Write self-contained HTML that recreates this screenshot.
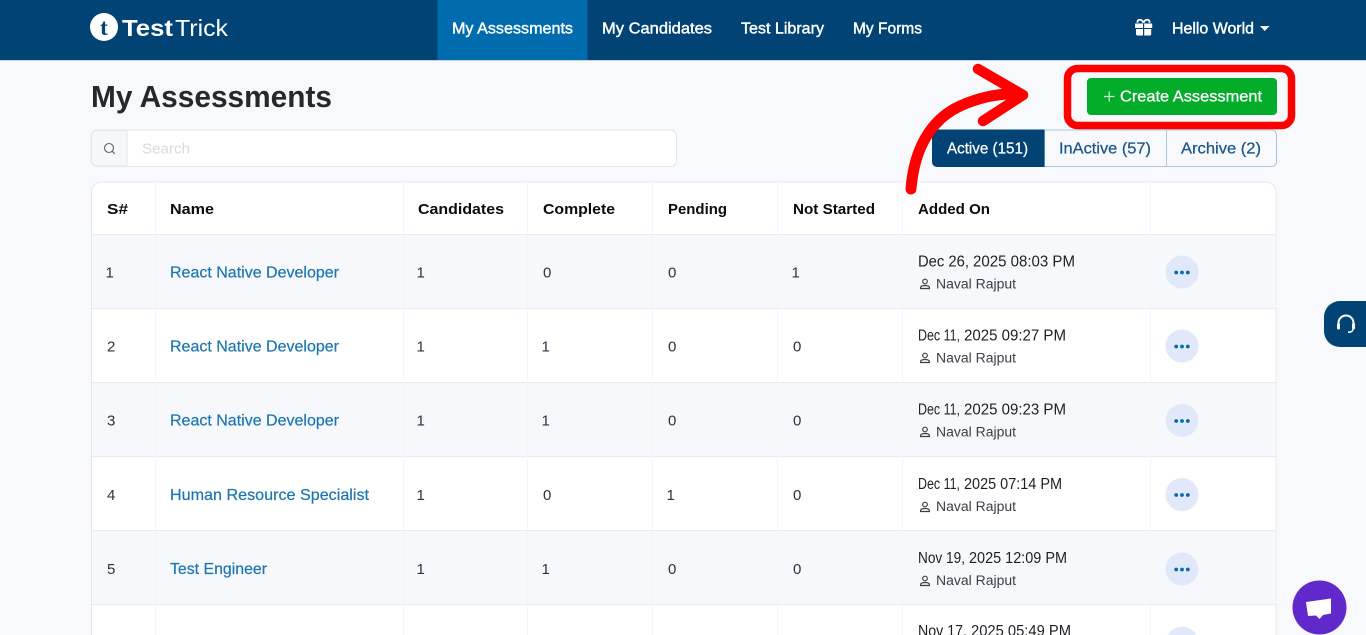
<!DOCTYPE html>
<html><head><meta charset="utf-8"><title>My Assessments</title>
<style>
html,body{margin:0;padding:0;width:1366px;height:635px;overflow:hidden;background:#f8f9fc}
svg{display:block}
text{font-family:"Liberation Sans",Arial,sans-serif;font-size:15px;fill:#212529}
.n{fill:#fff;font-size:15.5px;stroke:#fff;stroke-width:.4}
.h{font-size:15px;font-weight:700;fill:#0b0b0b}
.l{font-size:16px;fill:#1a75b0;stroke:#1a75b0;stroke-width:.2}
.c{font-size:15px;fill:#2b3240}
.d{font-size:15.5px;fill:#1c1f24}
.u{font-size:13.5px;fill:#3a3f47}
.t{font-size:16px;stroke-width:.25}
</style></head><body>
<svg width="1366" height="635" viewBox="0 0 1366 635" xmlns="http://www.w3.org/2000/svg">
<!-- navbar -->
<rect width="1366" height="60" fill="#014375"/>
<rect y="60" width="1366" height="1" fill="#c3d3e0"/>
<rect x="437.500" width="150" height="60" fill="#006bad"/>
<circle cx="104" cy="27" r="14" fill="#fff"/>
<text x="104" y="35" text-anchor="middle" style="font-family:'Liberation Serif',serif;font-size:23px;font-weight:700;fill:#014375">t</text>
<text x="122" y="36" textLength="51" lengthAdjust="spacingAndGlyphs" style="font-size:23px;font-weight:700;fill:#fff">Test</text>
<text x="175" y="36" textLength="53" lengthAdjust="spacingAndGlyphs" style="font-size:23px;fill:#fff">Trick</text>
<text class="n" x="452" y="33.500" textLength="121" lengthAdjust="spacingAndGlyphs">My Assessments</text>
<text class="n" x="602" y="33.500" textLength="110" lengthAdjust="spacingAndGlyphs">My Candidates</text>
<text class="n" x="741" y="33.500" textLength="83" lengthAdjust="spacingAndGlyphs">Test Library</text>
<text class="n" x="853" y="33.500" textLength="69" lengthAdjust="spacingAndGlyphs">My Forms</text>
<text class="n" x="1172" y="33.500" textLength="82" lengthAdjust="spacingAndGlyphs">Hello World</text>
<path d="M1260 26h9.500l-4.750 5z" fill="#fff"/>
<!-- gift -->
<path d="M1135 23.500h8v4.500h-8zM1144.200 23.500h8v4.500h-8zM1136 29h7v6.500h-5.500a1.500 1.500 0 0 1-1.500-1.500zM1144.200 29h7V34a1.500 1.500 0 0 1-1.500 1.500h-5.500z" fill="#fff"/>
<path d="M1143.500 23c-1.500-4.500-7-4-5.800-.3M1143.500 23c1.500-4.500 7-4 5.800-.3" fill="none" stroke="#fff" stroke-width="1.800"/>
<!-- title -->
<text x="91" y="107" textLength="241" lengthAdjust="spacingAndGlyphs" style="font-size:31px;font-weight:700;fill:#25282c">My Assessments</text>
<!-- search -->
<rect x="91" y="130" width="585.500" height="36.500" rx="6" fill="#fff" stroke="#e3e6ea"/>
<path d="M97 130.500h30v35.500h-30a5.500 5.500 0 0 1-5.500-5.500v-24.500a5.500 5.500 0 0 1 5.500-5.500z" fill="#f6f7f9" stroke="#e3e6ea"/>
<circle cx="109" cy="148" r="4.500" fill="none" stroke="#62676d" stroke-width="1.100"/>
<path d="M112.300 151.300l2.500 2.500" stroke="#62676d" stroke-width="1.100"/>
<text x="142" y="153.500" textLength="48" lengthAdjust="spacingAndGlyphs" style="font-size:15px;fill:#d9dadd">Search</text>
<!-- tabs -->
<path d="M1044.500 130h227a5 5 0 0 1 5 5v26.500a5 5 0 0 1-5 5h-227z" fill="#f8f9fc" stroke="#a9c6de"/>
<path d="M1166.500 130v36.500" stroke="#a9c6de"/>
<path d="M937 129.500h107.500v37.500H937a5 5 0 0 1-5-5v-27.500a5 5 0 0 1 5-5z" fill="#014375"/>
<text class="t" x="947" y="153.500" textLength="81" lengthAdjust="spacingAndGlyphs" style="fill:#fff;stroke:#fff">Active (151)</text>
<text class="t" x="1059" y="153.500" textLength="92" lengthAdjust="spacingAndGlyphs" style="fill:#1a5688;stroke:#1a5688">InActive (57)</text>
<text class="t" x="1181" y="153.500" textLength="80" lengthAdjust="spacingAndGlyphs" style="fill:#1a5688;stroke:#1a5688">Archive (2)</text>
<!-- table -->
<path d="M91.500 640V192a10 10 0 0 1 10-10h1164.500a10 10 0 0 1 10 10v448z" fill="#fff" stroke="#e4e8ee"/>
<rect x="92" y="235" width="1184" height="73" fill="#f7f8fb"/>
<rect x="92" y="383" width="1184" height="73" fill="#f7f8fb"/>
<rect x="92" y="531" width="1184" height="73" fill="#f7f8fb"/>
<g fill="#e8ebf0">
<rect x="92" y="234" width="1184" height="1.200"/><rect x="92" y="308" width="1184" height="1.200"/><rect x="92" y="382" width="1184" height="1.200"/><rect x="92" y="456" width="1184" height="1.200"/><rect x="92" y="530" width="1184" height="1.200"/><rect x="92" y="604" width="1184" height="1.200"/>
</g>
<g fill="#f3f5f8">
<rect x="155" y="183" width="1" height="452"/><rect x="403" y="183" width="1" height="452"/><rect x="527" y="183" width="1" height="452"/><rect x="652" y="183" width="1" height="452"/><rect x="777" y="183" width="1" height="452"/><rect x="902" y="183" width="1" height="452"/><rect x="1150" y="183" width="1" height="452"/>
</g>
<text class="h" x="107" y="214" textLength="21" lengthAdjust="spacingAndGlyphs">S#</text>
<text class="h" x="170" y="214" textLength="44" lengthAdjust="spacingAndGlyphs">Name</text>
<text class="h" x="418" y="214" textLength="86" lengthAdjust="spacingAndGlyphs">Candidates</text>
<text class="h" x="543" y="214" textLength="72" lengthAdjust="spacingAndGlyphs">Complete</text>
<text class="h" x="668" y="214" textLength="59" lengthAdjust="spacingAndGlyphs">Pending</text>
<text class="h" x="793" y="214" textLength="82" lengthAdjust="spacingAndGlyphs">Not Started</text>
<text class="h" x="918" y="214" textLength="72" lengthAdjust="spacingAndGlyphs">Added On</text>

<!-- row 1 -->
<text class="c" x="105.500" y="277.500">1</text>
<text class="l" x="170" y="277.500" textLength="169" lengthAdjust="spacingAndGlyphs">React Native Developer</text>
<text class="c" x="416.500" y="277.500">1</text>
<text class="c" x="543" y="277.500">0</text><text class="c" x="668" y="277.500">0</text>
<text class="c" x="791.500" y="277.500">1</text>
<text class="d" x="918" y="266.500" textLength="51" lengthAdjust="spacingAndGlyphs">Dec 26,</text>
<text class="d" x="973" y="266.500" textLength="102" lengthAdjust="spacingAndGlyphs">2025 08:03 PM</text>
<text class="u" x="936" y="288.500" textLength="80" lengthAdjust="spacingAndGlyphs">Naval Rajput</text>
<!-- row 2 -->
<text class="c" x="107" y="351.500">2</text>
<text class="l" x="170" y="351.500" textLength="169" lengthAdjust="spacingAndGlyphs">React Native Developer</text>
<text class="c" x="416.500" y="351.500">1</text>
<text class="c" x="541.500" y="351.500">1</text>
<text class="c" x="668" y="351.500">0</text><text class="c" x="793" y="351.500">0</text>
<text class="d" x="918" y="340.500" textLength="42" lengthAdjust="spacingAndGlyphs">Dec 11,</text>
<text class="d" x="964" y="340.500" textLength="102" lengthAdjust="spacingAndGlyphs">2025 09:27 PM</text>
<text class="u" x="936" y="362.500" textLength="80" lengthAdjust="spacingAndGlyphs">Naval Rajput</text>
<!-- row 3 -->
<text class="c" x="107" y="425.500">3</text>
<text class="l" x="170" y="425.500" textLength="169" lengthAdjust="spacingAndGlyphs">React Native Developer</text>
<text class="c" x="416.500" y="425.500">1</text>
<text class="c" x="541.500" y="425.500">1</text>
<text class="c" x="668" y="425.500">0</text><text class="c" x="793" y="425.500">0</text>
<text class="d" x="918" y="414.500" textLength="42" lengthAdjust="spacingAndGlyphs">Dec 11,</text>
<text class="d" x="964" y="414.500" textLength="102" lengthAdjust="spacingAndGlyphs">2025 09:23 PM</text>
<text class="u" x="936" y="436.500" textLength="80" lengthAdjust="spacingAndGlyphs">Naval Rajput</text>
<!-- row 4 -->
<text class="c" x="107" y="500">4</text>
<text class="l" x="170" y="500" textLength="199" lengthAdjust="spacingAndGlyphs">Human Resource Specialist</text>
<text class="c" x="416.500" y="500">1</text>
<text class="c" x="543" y="500">0</text>
<text class="c" x="666.500" y="500">1</text>
<text class="c" x="793" y="500">0</text>
<text class="d" x="918" y="489" textLength="42" lengthAdjust="spacingAndGlyphs">Dec 11,</text>
<text class="d" x="964" y="489" textLength="98" lengthAdjust="spacingAndGlyphs">2025 07:14 PM</text>
<text class="u" x="936" y="511" textLength="80" lengthAdjust="spacingAndGlyphs">Naval Rajput</text>
<!-- row 5 -->
<text class="c" x="107" y="574">5</text>
<text class="l" x="170" y="574" textLength="97" lengthAdjust="spacingAndGlyphs">Test Engineer</text>
<text class="c" x="416.500" y="574">1</text>
<text class="c" x="541.500" y="574">1</text>
<text class="c" x="668" y="574">0</text><text class="c" x="793" y="574">0</text>
<text class="d" x="918" y="563" textLength="47" lengthAdjust="spacingAndGlyphs">Nov 19,</text>
<text class="d" x="969" y="563" textLength="98" lengthAdjust="spacingAndGlyphs">2025 12:09 PM</text>
<text class="u" x="936" y="585" textLength="80" lengthAdjust="spacingAndGlyphs">Naval Rajput</text>
<!-- row 6 -->
<text class="d" x="918" y="636" textLength="49" lengthAdjust="spacingAndGlyphs">Nov 17,</text>
<text class="d" x="971" y="636" textLength="100" lengthAdjust="spacingAndGlyphs">2025 05:49 PM</text>
<circle cx="1182" cy="643" r="16.500" fill="#e0e8fa"/>

<!-- user icons -->
<g fill="none" stroke="#3a3f47" stroke-width="1.200">
<g><circle cx="925" cy="281.500" r="2.300"/><path d="M920.600 288.500v-.8c0-1.400 2-2.200 4.400-2.200s4.400.8 4.400 2.200v.8z"/></g>
<g transform="translate(0 74)"><circle cx="925" cy="281.500" r="2.300"/><path d="M920.600 288.500v-.8c0-1.400 2-2.200 4.400-2.200s4.400.8 4.400 2.200v.8z"/></g>
<g transform="translate(0 148)"><circle cx="925" cy="281.500" r="2.300"/><path d="M920.600 288.500v-.8c0-1.400 2-2.200 4.400-2.200s4.400.8 4.400 2.200v.8z"/></g>
<g transform="translate(0 223)"><circle cx="925" cy="281.500" r="2.300"/><path d="M920.600 288.500v-.8c0-1.400 2-2.200 4.400-2.200s4.400.8 4.400 2.200v.8z"/></g>
<g transform="translate(0 297)"><circle cx="925" cy="281.500" r="2.300"/><path d="M920.600 288.500v-.8c0-1.400 2-2.200 4.400-2.200s4.400.8 4.400 2.200v.8z"/></g>
</g>
<!-- action buttons -->
<g fill="#e0e8fa"><circle cx="1182" cy="272" r="16.500"/><circle cx="1182" cy="346" r="16.500"/><circle cx="1182" cy="420.500" r="16.500"/><circle cx="1182" cy="494.500" r="16.500"/><circle cx="1182" cy="569" r="16.500"/></g>
<g fill="#0a69ad">
<circle cx="1176.200" cy="272.500" r="1.900"/><circle cx="1182" cy="272.500" r="1.900"/><circle cx="1187.800" cy="272.500" r="1.900"/>
<circle cx="1176.200" cy="346.500" r="1.900"/><circle cx="1182" cy="346.500" r="1.900"/><circle cx="1187.800" cy="346.500" r="1.900"/>
<circle cx="1176.200" cy="421" r="1.900"/><circle cx="1182" cy="421" r="1.900"/><circle cx="1187.800" cy="421" r="1.900"/>
<circle cx="1176.200" cy="495" r="1.900"/><circle cx="1182" cy="495" r="1.900"/><circle cx="1187.800" cy="495" r="1.900"/>
<circle cx="1176.200" cy="569.500" r="1.900"/><circle cx="1182" cy="569.500" r="1.900"/><circle cx="1187.800" cy="569.500" r="1.900"/>
</g>

<!-- create button -->
<rect x="1087" y="78" width="190" height="37" rx="4" fill="#03ac29"/>
<path d="M1104 96.500h10.500M1109.200 91.200v10.500" stroke="#cdeed5" stroke-width="1.200"/>
<text x="1120" y="101.500" textLength="142" lengthAdjust="spacingAndGlyphs" style="font-size:16px;fill:#fff;stroke:#fff;stroke-width:.3">Create Assessment</text>
<rect x="1067.500" y="68.500" width="224" height="57" rx="10" fill="none" stroke="#ff0000" stroke-width="7.500"/>

<!-- arrow -->
<path d="M911 189C914 150 930 120 960 106C980 97 1000 93 1020 94" fill="none" stroke="#ff0000" stroke-width="11" stroke-linecap="round"/>
<path d="M978 69L1023 95L983 121" fill="none" stroke="#ff0000" stroke-width="10.500" stroke-linecap="round" stroke-linejoin="round"/>

<!-- support tab -->
<path d="M1366 301h-26a16 16 0 0 0-16 16v14a16 16 0 0 0 16 16h26z" fill="#014375"/>
<path d="M1338.500 327v-4a7.500 7.500 0 0 1 15 0v4" fill="none" stroke="#fff" stroke-width="2"/>
<rect x="1337" y="323" width="3" height="6.500" rx="1.500" fill="#fff"/><rect x="1352" y="323" width="3" height="6.500" rx="1.500" fill="#fff"/>
<path d="M1353 329c0 2.500-2 3.200-5 3.200" fill="none" stroke="#fff" stroke-width="1.500"/>

<!-- chat bubble -->
<circle cx="1319.500" cy="607.500" r="27" fill="#6128cc"/>
<path d="M1306 602L1331 598.500V613.500L1323 615L1319.500 619L1316 615.500L1308 616z" fill="#fff"/>
</svg>
</body></html>
